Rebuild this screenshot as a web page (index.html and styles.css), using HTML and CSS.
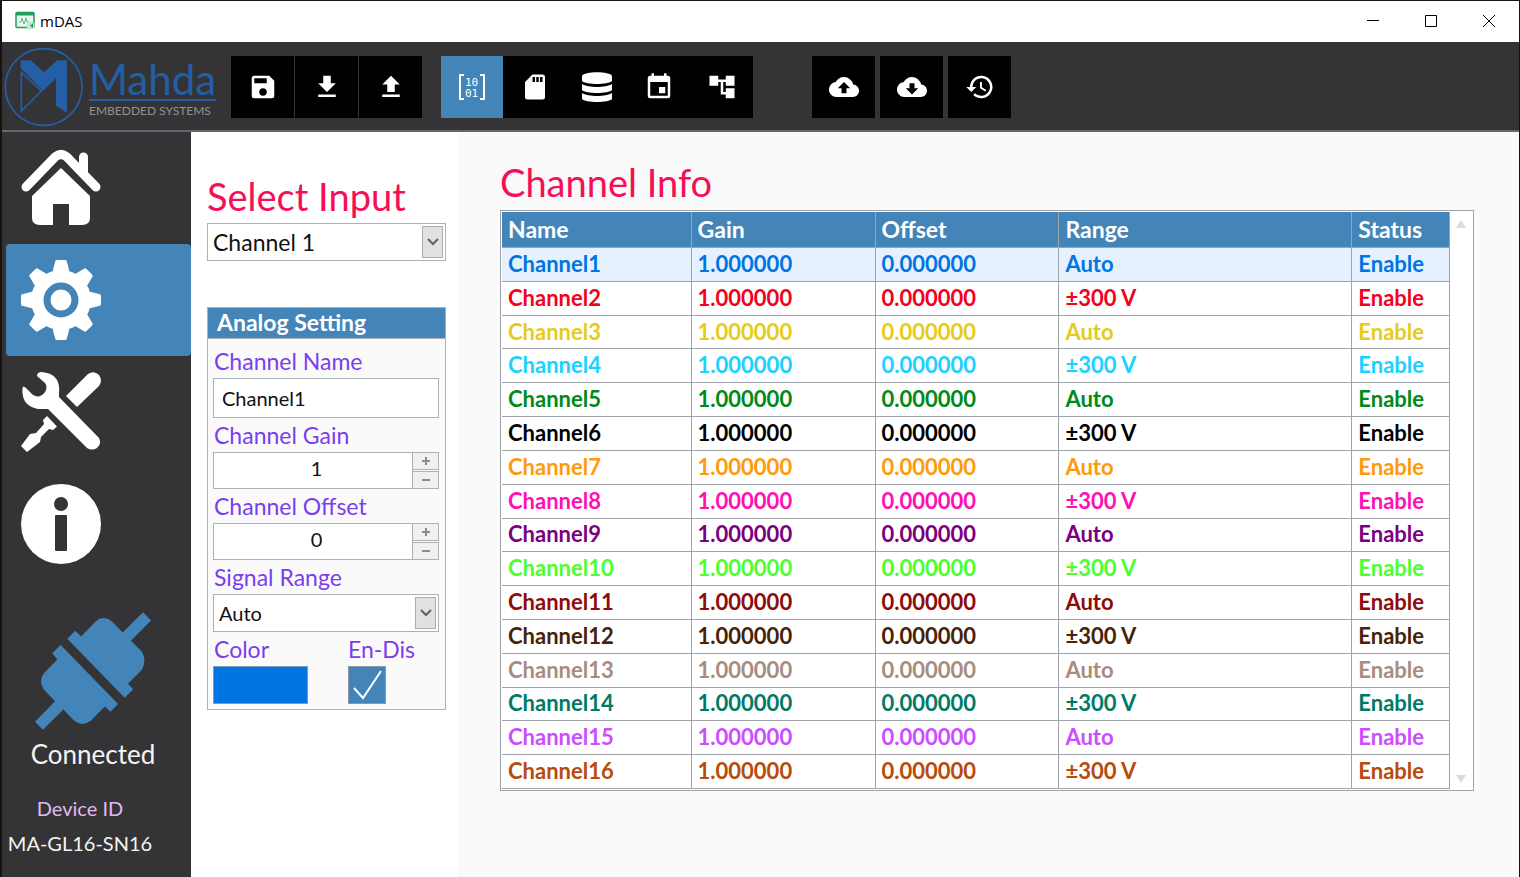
FILE: index.html
```html
<!DOCTYPE html>
<html lang="en">
<head>
    <meta charset="UTF-8">
    <meta name="viewport" content="width=device-width, initial-scale=1.0">
    <title>mDAS</title>
    <link rel="stylesheet" href="styles.css">
</head>
<body>
    <header class="titlebar">
        <svg class="app-icon" viewBox="0 0 20 20">
            <rect x="1" y="1.500" width="18" height="15" rx="1" fill="#e9f7ef" stroke="#1f9d5b" stroke-width="1.500"/>
            <rect x="1" y="1" width="18" height="3.500" fill="#1f9d5b"/>
            <path d="M4 11h2l1-4 2 6 2-6 1 4h2" fill="none" stroke="#5fbd8b"/>
            <circle cx="15.500" cy="14.500" r="4" fill="#c4ead5"/>
            <path d="M13 12l2.500 2.500L18 12v5l-1.500-1" fill="#1f9d5b"/>
        </svg>
        <span class="app-name">mDAS</span>
        <div class="window-buttons">
            <button aria-label="Minimize"><svg viewBox="0 0 12 12"><path d="M0 5.500h12"/></svg></button>
            <button aria-label="Maximize"><svg viewBox="0 0 12 12"><path d="M.5.500h11v11H.5z"/></svg></button>
            <button aria-label="Close"><svg viewBox="0 0 12 12"><path d="M0 0l12 12M12 0L0 12"/></svg></button>
        </div>
    </header>

    <div class="toolbar">
        <div class="logo">
            <svg class="logo-mark" viewBox="12 140 240 240">
                <circle cx="131" cy="260" r="115" fill="none" stroke="#245fa5" stroke-width="5"/>
                <path d="M62 180H92L132 216 172 180H201V337L168 316V234L129 271 62 204z" fill="#245fa5"/>
                <path d="M64 216V332L124 272z" fill="#343436" stroke="#245fa5" stroke-width="5"/>
            </svg>
            <div class="logo-text">
                <span class="logo-name">Mahda</span>
                <span class="logo-sub">EMBEDDED SYSTEMS</span>
            </div>
        </div>
        <div class="tools file-tools">
            <button aria-label="Save"><svg viewBox="0 0 24 24"><path d="M17 3H5a2 2 0 0 0-2 2v14a2 2 0 0 0 2 2h14a2 2 0 0 0 2-2V7l-4-4zm-5 16a3 3 0 1 1 0-6 3 3 0 0 1 0 6zm3-10H5V5h10v4z"/></svg></button>
            <button aria-label="Download"><svg viewBox="0 0 24 24"><path d="M19 9h-4V3H9v6H5l7 7 7-7zM5 18v2h14v-2H5z"/></svg></button>
            <button aria-label="Upload"><svg viewBox="0 0 24 24"><path d="M9 16h6v-6h4l-7-7-7 7h4v6zm-4 2h14v2H5v-2z"/></svg></button>
        </div>
        <div class="tools view-tools">
            <button class="active" aria-label="Channels">
                <svg viewBox="0 0 30 30">
                    <path d="M7 3H3v24h4M23 3h4v24h-4" fill="none" stroke="#fff" stroke-width="2"/>
                    <text x="8" y="14">10</text>
                    <text x="8" y="25">01</text>
                </svg>
            </button>
            <button aria-label="SD card"><svg viewBox="0 0 24 24"><path d="M18 2h-8L4 8v12a2 2 0 0 0 2 2h12a2 2 0 0 0 2-2V4a2 2 0 0 0-2-2zm-6 6h-2V4h2v4zm3 0h-2V4h2v4zm3 0h-2V4h2v4z"/></svg></button>
            <button aria-label="Database">
                <svg viewBox="0 0 30 30">
                    <path d="M0 4C2-1 28-1 30 4V9C26 13 4 13 0 9zM0 12C6 16 24 16 30 12V18C27 22 3 22 0 18zM0 21C6 25 24 25 30 21V27C27 31 3 31 0 27z"/>
                </svg>
            </button>
            <button aria-label="Schedule"><svg viewBox="0 0 24 24"><path d="M17 12h-5v5h5v-5zM16 1v2H8V1H6v2H5a2 2 0 0 0-2 2v14a2 2 0 0 0 2 2h14a2 2 0 0 0 2-2V5a2 2 0 0 0-2-2h-1V1h-2zm3 18H5V8h14v11z"/></svg></button>
            <button aria-label="Tree"><svg viewBox="0 0 24 24"><path d="M22 11V3h-7v3H9V3H2v8h7V8h2v10h4v3h7v-8h-7v3h-2V8h2v3z"/></svg></button>
        </div>
        <div class="tools cloud-tools">
            <button aria-label="Cloud upload"><svg viewBox="0 0 24 24"><path d="M19.350 10.040A7.490 7.490 0 0 0 12 4C9.110 4 6.600 5.640 5.350 8.040A5.994 5.994 0 0 0 0 14c0 3.310 2.690 6 6 6h13c2.760 0 5-2.240 5-5 0-2.640-2.050-4.780-4.650-4.960zM14 13v4h-4v-4H7l5-5 5 5h-3z"/></svg></button>
            <button aria-label="Cloud download"><svg viewBox="0 0 24 24"><path d="M19.350 10.040A7.490 7.490 0 0 0 12 4C9.110 4 6.600 5.640 5.350 8.040A5.994 5.994 0 0 0 0 14c0 3.310 2.690 6 6 6h13c2.760 0 5-2.240 5-5 0-2.640-2.050-4.780-4.650-4.960zM17 13l-5 5-5-5h3V9h4v4h3z"/></svg></button>
            <button aria-label="History"><svg viewBox="0 0 24 24"><path d="M13 3a9 9 0 0 0-9 9H1l4 4 4-4H6a7 7 0 1 1 2.050 4.940l-1.420 1.420A9 9 0 1 0 13 3zm-1 5v5l4.280 2.540.720-1.210-3.500-2.080V8H12z"/></svg></button>
        </div>
    </div>

    <div class="content">
        <aside class="sidebar">
            <nav class="menu">
                <button aria-label="Home">
                    <svg viewBox="0 0 80 80">
                        <path d="M5 39L34 9Q40 4 46 9L75 39" fill="none" stroke="#fff" stroke-width="9" stroke-linecap="round"/>
                        <path d="M58 26V9a4 4 0 0 1 9 0V33z"/>
                        <path d="M40 20L69 48V70Q69 77 61 77H48V56H32V77H19Q11 77 11 70V48z"/>
                    </svg>
                </button>
                <button class="active" aria-label="Settings">
                    <svg viewBox="0 0 80 80">
                        <circle cx="40" cy="40" r="30"/>
                        <g id="teeth">
                            <path id="tooth" d="M31 14L34 2Q34 0 36 0H44Q46 0 46 2L49 14z"/>
                            <use href="#tooth" transform="rotate(45 40 40)"/>
                            <use href="#tooth" transform="rotate(90 40 40)"/>
                            <use href="#tooth" transform="rotate(135 40 40)"/>
                        </g>
                        <use href="#teeth" transform="rotate(180 40 40)"/>
                        <circle cx="40" cy="40" r="14" fill="none" stroke="#4385b8" stroke-width="7"/>
                    </svg>
                </button>
                <button aria-label="Tools">
                    <svg viewBox="0 0 80 80">
                        <path d="M1.500 16Q2 13 5 16L12 23Q19 27 24 20 27 15 24 11L16 4Q16 0 21 0 40 2 38 21L38 25 78 66Q81 72 76 76 71 79 66 76L27 37Q20 37 17 37 0 34 1.500 16z"/>
                        <path d="M45 24L67 2Q73-2 78 3 82 9 78 14L56 35z"/>
                        <path d="M26 44L36 54.500 32 58 28 57 20 65 19 70 6 80 0 74 9 62 15 61 23 52 22 48z"/>
                    </svg>
                </button>
                <button aria-label="Info">
                    <svg viewBox="0 0 80 80">
                        <circle cx="40" cy="40" r="40"/>
                        <circle cx="40" cy="20" r="7" fill="#343436"/>
                        <rect x="34" y="31" width="12" height="36" rx="1" fill="#343436"/>
                    </svg>
                </button>
            </nav>
            <div class="connection">
                <svg class="plug" viewBox="106 64 352 358">
                    <path d="M204 145L228 121 246 138 290 93Q313 72 340 93L372 126 434 65 458 90 397 151 430 184Q446 212 430 240L388 282 404 298 378 324z"/>
                    <path d="M184 164L358 343 335 367 318 351 275 394Q250 413 225 394L192 360 130 421 106 397 167 335 133 300Q116 272 133 250L174 208 158 189z"/>
                </svg>
                <p class="state">Connected</p>
            </div>
            <div class="device">
                <p class="device-label">Device ID</p>
                <p class="device-id">MA-GL16-SN16</p>
            </div>
        </aside>

        <section class="settings">
            <h1><label for="input">Select Input</label></h1>
            <div class="dropdown big">
                <select id="input">
                    <option>Channel 1</option>
                    <option>Channel 2</option>
                </select>
                <span class="arrow"><svg viewBox="0 0 12 8"><path d="M1 1l5 5 5-5"/></svg></span>
            </div>

            <form class="analog">
                <h2>Analog Setting</h2>
                <div class="fields">
                    <label for="name">Channel Name</label>
                    <input class="text" id="name" type="text" value="Channel1">

                    <label for="gain">Channel Gain</label>
                    <div class="spinner">
                        <input id="gain" type="text" value="1">
                        <div class="steps">
                            <button type="button" aria-label="Increase gain"><svg viewBox="0 0 8 8"><path d="M0 4h8M4 0v8"/></svg></button>
                            <button type="button" aria-label="Decrease gain"><svg viewBox="0 0 8 8"><path d="M0 4h8"/></svg></button>
                        </div>
                    </div>

                    <label for="offset">Channel Offset</label>
                    <div class="spinner">
                        <input id="offset" type="text" value="0">
                        <div class="steps">
                            <button type="button" aria-label="Increase offset"><svg viewBox="0 0 8 8"><path d="M0 4h8M4 0v8"/></svg></button>
                            <button type="button" aria-label="Decrease offset"><svg viewBox="0 0 8 8"><path d="M0 4h8"/></svg></button>
                        </div>
                    </div>

                    <label for="range">Signal Range</label>
                    <div class="dropdown">
                        <select id="range">
                            <option>Auto</option>
                            <option>±300 V</option>
                        </select>
                        <span class="arrow"><svg viewBox="0 0 12 8"><path d="M1 1l5 5 5-5"/></svg></span>
                    </div>

                    <div class="last-row">
                        <div class="color-field">
                            <label for="color">Color</label>
                            <button class="swatch" id="color" type="button"></button>
                        </div>
                        <div class="enable-field">
                            <label for="enable">En-Dis</label>
                            <div class="check">
                                <input id="enable" type="checkbox" checked>
                                <svg viewBox="0 0 38 38"><path d="M6 22L15 32 33 5"/></svg>
                            </div>
                        </div>
                    </div>
                </div>
            </form>
        </section>

        <main class="info">
            <h1>Channel Info</h1>
            <div class="grid">
                <table>
                    <colgroup>
                        <col class="col-name">
                        <col class="col-value">
                        <col class="col-value">
                        <col class="col-range">
                        <col class="col-status">
                    </colgroup>
                    <thead>
                        <tr><th>Name</th><th>Gain</th><th>Offset</th><th>Range</th><th>Status</th></tr>
                    </thead>
                    <tbody>
                        <tr class="ch1 selected"><td>Channel1</td><td>1.000000</td><td>0.000000</td><td>Auto</td><td>Enable</td></tr>
                        <tr class="ch2"><td>Channel2</td><td>1.000000</td><td>0.000000</td><td>±300 V</td><td>Enable</td></tr>
                        <tr class="ch3"><td>Channel3</td><td>1.000000</td><td>0.000000</td><td>Auto</td><td>Enable</td></tr>
                        <tr class="ch4"><td>Channel4</td><td>1.000000</td><td>0.000000</td><td>±300 V</td><td>Enable</td></tr>
                        <tr class="ch5"><td>Channel5</td><td>1.000000</td><td>0.000000</td><td>Auto</td><td>Enable</td></tr>
                        <tr class="ch6"><td>Channel6</td><td>1.000000</td><td>0.000000</td><td>±300 V</td><td>Enable</td></tr>
                        <tr class="ch7"><td>Channel7</td><td>1.000000</td><td>0.000000</td><td>Auto</td><td>Enable</td></tr>
                        <tr class="ch8"><td>Channel8</td><td>1.000000</td><td>0.000000</td><td>±300 V</td><td>Enable</td></tr>
                        <tr class="ch9"><td>Channel9</td><td>1.000000</td><td>0.000000</td><td>Auto</td><td>Enable</td></tr>
                        <tr class="ch10"><td>Channel10</td><td>1.000000</td><td>0.000000</td><td>±300 V</td><td>Enable</td></tr>
                        <tr class="ch11"><td>Channel11</td><td>1.000000</td><td>0.000000</td><td>Auto</td><td>Enable</td></tr>
                        <tr class="ch12"><td>Channel12</td><td>1.000000</td><td>0.000000</td><td>±300 V</td><td>Enable</td></tr>
                        <tr class="ch13"><td>Channel13</td><td>1.000000</td><td>0.000000</td><td>Auto</td><td>Enable</td></tr>
                        <tr class="ch14"><td>Channel14</td><td>1.000000</td><td>0.000000</td><td>±300 V</td><td>Enable</td></tr>
                        <tr class="ch15"><td>Channel15</td><td>1.000000</td><td>0.000000</td><td>Auto</td><td>Enable</td></tr>
                        <tr class="ch16"><td>Channel16</td><td>1.000000</td><td>0.000000</td><td>±300 V</td><td>Enable</td></tr>
                    </tbody>
                </table>
                <div class="scrollbar">
                    <svg viewBox="0 0 10 8"><path d="M5 0l5 8H0z"/></svg>
                    <svg viewBox="0 0 10 8"><path d="M0 0h10L5 8z"/></svg>
                </div>
            </div>
        </main>
    </div>
</body>
</html>
```
FILE: styles.css
```css
* {
    box-sizing: border-box;
}
body {
    display: flex;
    flex-direction: column;
    min-height: 100vh;
    margin: 0;
    border: solid #17130f;
    border-width: 1px 1px 0 2px;
    background-color: #fafafa;
    font-family: Lato, "Liberation Sans", sans-serif;
    font-size: 22px;
    color: #111;
}
h1, h2, p {
    margin: 0;
    font-weight: normal;
}
button, input, select {
    margin: 0;
    padding: 0;
    border: 0;
    border-radius: 0;
    font: inherit;
    color: inherit;
}
svg {
    display: block;
}

/* title bar */
.titlebar {
    display: flex;
    align-items: center;
    height: 41px;
    padding: 0 1px 1px 13px;
    background-color: #fff;
}
.app-icon {
    width: 20px;
    height: 20px;
}
.app-name {
    margin-left: 5px;
    font-family: "Open Sans", sans-serif;
    font-size: 15px;
    color: #000;
}
.window-buttons {
    display: flex;
    margin-left: auto;
}
.window-buttons button {
    display: flex;
    justify-content: center;
    align-items: center;
    width: 58px;
    height: 40px;
    background: none;
}
.window-buttons svg {
    width: 12px;
    height: 12px;
    fill: none;
    stroke: #000;
}

/* toolbar */
.toolbar {
    display: flex;
    align-items: center;
    height: 90px;
    padding-top: 2px;
    border-bottom: 2px solid #67666c;
    background-color: #343436;
}
.logo {
    display: flex;
    align-items: center;
    width: 229px;
    padding-left: 2px;
}
.logo-mark {
    width: 80px;
    height: 80px;
}
.logo-text {
    display: flex;
    flex-direction: column;
    margin-left: 5px;
    padding-top: 2px;
}
.logo-name {
    border-bottom: 2px solid #245fa5;
    font-size: 42px;
    line-height: 40px;
    color: #245fa5;
}
.logo-sub {
    margin-top: 3px;
    font-size: 12px;
    line-height: 13px;
    color: #929294;
}
.tools {
    display: flex;
}
.tools button {
    display: flex;
    justify-content: center;
    align-items: center;
    width: 63px;
    height: 62px;
    background-color: #000;
}
.tools button.active {
    background-color: #4385b8;
}
.tools svg {
    width: 30px;
    height: 30px;
    fill: #fff;
}
.tools text {
    font-family: "DejaVu Sans Mono", monospace;
    font-size: 11px;
}
.file-tools {
    gap: 1px;
}
.view-tools {
    width: 312px;
    margin-left: 19px;
}
.view-tools button {
    flex: 1;
}
.cloud-tools {
    gap: 5px;
    margin-left: 59px;
}

.content {
    display: flex;
    flex: 1;
}

/* sidebar */
.sidebar {
    width: 189px;
    padding-left: 4px;
    background-color: #343436;
    color: #f4f4f4;
}
.menu button {
    display: flex;
    align-items: center;
    width: 100%;
    height: 112px;
    padding-left: 15px;
    border-radius: 4px;
    background: none;
}
.menu button.active {
    background-color: #4385b8;
}
.menu svg {
    width: 80px;
    height: 80px;
    fill: #fff;
}
.connection {
    display: flex;
    flex-direction: column;
    align-items: center;
    padding: 32px 11px 0 0;
}
.plug {
    width: 118px;
    height: 118px;
    fill: #4385b8;
}
.state {
    margin-top: 8px;
    font-size: 26px;
    line-height: 32px;
}
.device {
    padding: 21px 37px 0 0;
    font-size: 20px;
    line-height: 35px;
    text-align: center;
    white-space: nowrap;
}
.device-label {
    color: #e3b8f0;
}

/* settings column */
.settings {
    width: 267px;
    padding: 42px 12px 0 16px;
    background-color: #fff;
}
h1 {
    font-size: 38px;
    line-height: 44px;
    color: #f50f57;
}
.dropdown {
    position: relative;
    height: 38px;
}
.dropdown select {
    width: 100%;
    height: 100%;
    padding: 0 0 1px 5px;
    border: 1px solid #adb0b5;
    background-color: #fff;
    font-size: 20px;
    appearance: none;
}
.dropdown.big {
    margin-top: 5px;
}
.dropdown.big select {
    font-size: 23px;
}
.arrow {
    position: absolute;
    top: 3px;
    right: 3px;
    bottom: 3px;
    display: flex;
    justify-content: center;
    align-items: center;
    width: 21px;
    border: 1px solid #adadad;
    background-color: #e1e1e1;
    pointer-events: none;
}
.arrow svg {
    width: 12px;
    height: 8px;
    fill: none;
    stroke: #606060;
    stroke-width: 2;
}
.analog {
    margin-top: 46px;
    border: 1px solid #adb0b5;
    background-color: #fafafa;
}
.analog h2 {
    padding: 0 0 2px 9px;
    border-bottom: 1px solid #adb0b5;
    background-color: #4385b8;
    font-size: 23px;
    font-weight: bold;
    line-height: 28px;
    color: #fff;
}
.fields {
    padding: 5px 6px 5px 5px;
}
.fields label {
    display: block;
    padding-left: 1px;
    font-size: 23px;
    line-height: 34px;
    color: #7a3df0;
}
.text {
    display: block;
    width: 100%;
    height: 40px;
    padding-left: 8px;
    border: 1px solid #adb0b5;
    background-color: #fff;
    font-size: 20px;
}
.spinner {
    display: flex;
    height: 37px;
}
.spinner > input {
    flex: 1;
    min-width: 0;
    padding: 0 0 5px 7px;
    border: 1px solid #adb0b5;
    background-color: #fff;
    font-size: 20px;
    text-align: center;
}
.steps {
    display: flex;
    flex-direction: column;
    gap: 1px;
    width: 26px;
}
.steps button {
    display: flex;
    flex: 1;
    justify-content: center;
    align-items: center;
    border: 1px solid #adb0b5;
    border-left: 0;
    background-color: #f0f0f0;
}
.steps svg {
    width: 8px;
    height: 8px;
    fill: none;
    stroke: #8c8c8c;
    stroke-width: 2;
}
.last-row {
    display: flex;
    gap: 40px;
}
.swatch {
    display: block;
    width: 95px;
    height: 38px;
    border: 1px solid #7d9cb8;
    background-color: #0074e0;
}
.enable-field label {
    padding-left: 0;
}
.check {
    position: relative;
    width: 38px;
    height: 38px;
}
.check input {
    display: block;
    width: 100%;
    height: 100%;
    border: 1px solid #8d9aa5;
    background-color: #4385b8;
    appearance: none;
}
.check svg {
    position: absolute;
    top: 0;
    left: 0;
    fill: none;
    stroke: #fff;
    stroke-width: 2;
    pointer-events: none;
}
.check input:not(:checked) + svg {
    display: none;
}

/* channel table */
.info {
    flex: 1;
    padding: 28px 45px 0 42px;
}
.grid {
    display: flex;
    margin-top: 6px;
    padding: 1px 0 1px 1px;
    border: 1px solid #a0a4a8;
    background-color: #fff;
}
table {
    flex: 1;
    height: 577px;
    border-collapse: separate;
    border-spacing: 0;
    table-layout: fixed;
    font-weight: bold;
}
.col-name {
    width: 20%;
}
.col-value {
    width: 19.4%;
}
.col-range {
    width: 30.9%;
}
.col-status {
    width: 10.3%;
}
th, td {
    padding: 0 0 1px 6px;
    border-right: 1px solid #a0a4a8;
    border-bottom: 1px solid #a0a4a8;
    line-height: 28px;
    text-align: left;
}
th {
    height: 36px;
    background-color: #4385b8;
    font-size: 23px;
    color: #fff;
}
.selected {
    background-color: #e5f1ff;
}
.scrollbar {
    display: flex;
    flex-direction: column;
    justify-content: space-between;
    align-items: center;
    width: 23px;
    padding: 8px 2px 6px 0;
}
.scrollbar svg {
    width: 10px;
    height: 8px;
    fill: #dcdcdc;
}
.ch1 { color: #0074e0; }
.ch2 { color: #f5001d; }
.ch3 { color: #e6cc1a; }
.ch4 { color: #1ad1ff; }
.ch5 { color: #008a17; }
.ch6 { color: #000; }
.ch7 { color: #ff9a0a; }
.ch8 { color: #ff0fb4; }
.ch9 { color: #7a0080; }
.ch10 { color: #4dff2e; }
.ch11 { color: #8f0a0a; }
.ch12 { color: #472208; }
.ch13 { color: #a88c80; }
.ch14 { color: #007a66; }
.ch15 { color: #cc4dff; }
.ch16 { color: #b84a0a; }
```
